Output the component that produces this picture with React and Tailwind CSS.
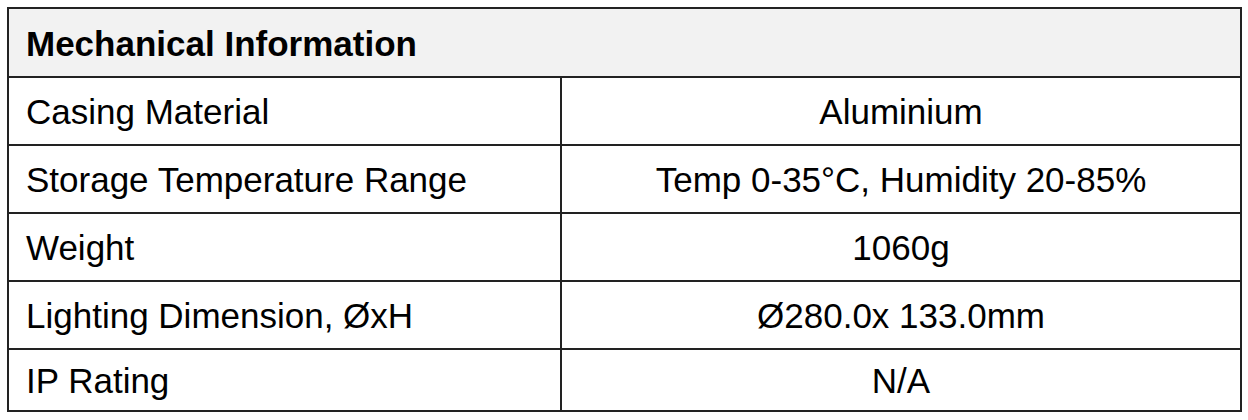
const rows = [
  ['Casing Material', 'Aluminium', 'h-[68px]'],
  ['Storage Temperature Range', 'Temp 0-35°C, Humidity 20-85%', 'h-[68px]'],
  ['Weight', '1060g', 'h-[68px]'],
  ['Lighting Dimension, ØxH', 'Ø280.0x 133.0mm', 'h-[68px]'],
  ['IP Rating', 'N/A', 'h-[62px]'],
];

export default function App() {
  return (
    <div className="bg-white w-[1248px] h-[420px] pt-[7px] pl-[7px]" style={{ fontFamily: '"Liberation Sans", Arial, sans-serif' }}>
      <table className="border-collapse w-[1235px] text-[35px] leading-none text-black">
        <thead>
          <tr className="h-[69px] bg-[#f2f2f2]">
            <th colSpan={2} className="border-2 border-[#222] text-left font-bold pl-[17px] pt-[1px]">
              Mechanical Information
            </th>
          </tr>
        </thead>
        <tbody>
          {rows.map(([label, value, h]) => (
            <tr key={label} className={h}>
              <td className="border-2 border-[#222] pl-[17px] w-[553px]">{label}</td>
              <td className="border-2 border-[#222] text-center">{value}</td>
            </tr>
          ))}
        </tbody>
      </table>
    </div>
  );
}
